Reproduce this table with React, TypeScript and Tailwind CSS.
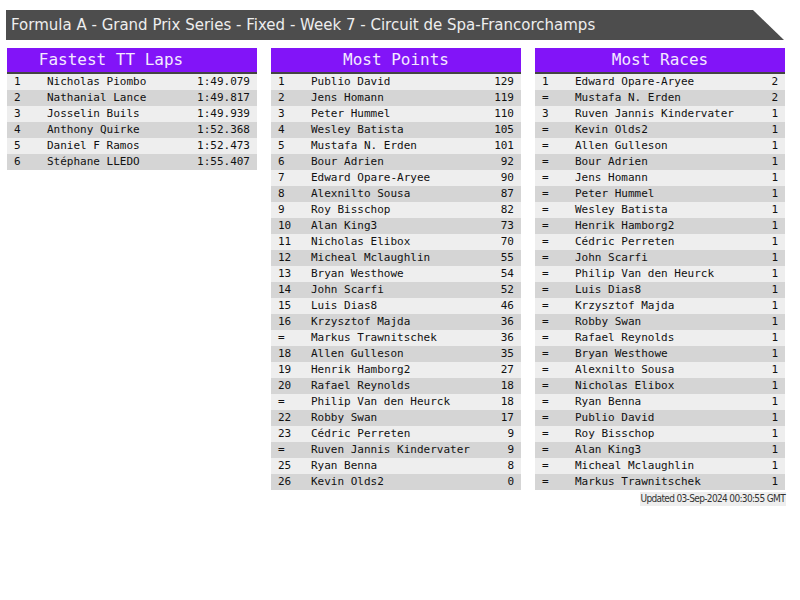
type Row = [string, string, string];

const fastest: Row[] = [
  ["1", "Nicholas Piombo", "1:49.079"],
  ["2", "Nathanial Lance", "1:49.817"],
  ["3", "Josselin Buils", "1:49.939"],
  ["4", "Anthony Quirke", "1:52.368"],
  ["5", "Daniel F Ramos", "1:52.473"],
  ["6", "Stéphane LLEDO", "1:55.407"],
];

const points: Row[] = [
  ["1", "Publio David", "129"],
  ["2", "Jens Homann", "119"],
  ["3", "Peter Hummel", "110"],
  ["4", "Wesley Batista", "105"],
  ["5", "Mustafa N. Erden", "101"],
  ["6", "Bour Adrien", "92"],
  ["7", "Edward Opare-Aryee", "90"],
  ["8", "Alexnilto Sousa", "87"],
  ["9", "Roy Bisschop", "82"],
  ["10", "Alan King3", "73"],
  ["11", "Nicholas Elibox", "70"],
  ["12", "Micheal Mclaughlin", "55"],
  ["13", "Bryan Westhowe", "54"],
  ["14", "John Scarfi", "52"],
  ["15", "Luis Dias8", "46"],
  ["16", "Krzysztof Majda", "36"],
  ["=", "Markus Trawnitschek", "36"],
  ["18", "Allen Gulleson", "35"],
  ["19", "Henrik Hamborg2", "27"],
  ["20", "Rafael Reynolds", "18"],
  ["=", "Philip Van den Heurck", "18"],
  ["22", "Robby Swan", "17"],
  ["23", "Cédric Perreten", "9"],
  ["=", "Ruven Jannis Kindervater", "9"],
  ["25", "Ryan Benna", "8"],
  ["26", "Kevin Olds2", "0"],
];

const races: Row[] = [
  ["1", "Edward Opare-Aryee", "2"],
  ["=", "Mustafa N. Erden", "2"],
  ["3", "Ruven Jannis Kindervater", "1"],
  ["=", "Kevin Olds2", "1"],
  ["=", "Allen Gulleson", "1"],
  ["=", "Bour Adrien", "1"],
  ["=", "Jens Homann", "1"],
  ["=", "Peter Hummel", "1"],
  ["=", "Wesley Batista", "1"],
  ["=", "Henrik Hamborg2", "1"],
  ["=", "Cédric Perreten", "1"],
  ["=", "John Scarfi", "1"],
  ["=", "Philip Van den Heurck", "1"],
  ["=", "Luis Dias8", "1"],
  ["=", "Krzysztof Majda", "1"],
  ["=", "Robby Swan", "1"],
  ["=", "Rafael Reynolds", "1"],
  ["=", "Bryan Westhowe", "1"],
  ["=", "Alexnilto Sousa", "1"],
  ["=", "Nicholas Elibox", "1"],
  ["=", "Ryan Benna", "1"],
  ["=", "Publio David", "1"],
  ["=", "Roy Bisschop", "1"],
  ["=", "Alan King3", "1"],
  ["=", "Micheal Mclaughlin", "1"],
  ["=", "Markus Trawnitschek", "1"],
];

function Board({ title, rows, offset }: { title: string; rows: Row[]; offset?: boolean }) {
  return (
    <div className="w-[250px] font-['DejaVu_Sans_Mono',monospace]">
      <div
        className={`h-[24px] bg-[#8214f8] text-[#f3eaff] text-[16px] leading-[24px] flex justify-center border-b-2 border-[#444444] box-content ${offset ? "pr-[42px]" : ""}`}
      >
        {title}
      </div>
      <div className="flex flex-col">
        {rows.map((r, i) => (
          <div
            key={i}
            className={`h-[16px] flex items-center text-[11px] text-[#111111] pl-[7px] pr-[7px] ${i % 2 === 0 ? "bg-[#eeeeee]" : "bg-[#d5d5d5]"}`}
          >
            <span className="w-[33px] shrink-0">{r[0]}</span>
            <span className="flex-1 whitespace-pre">{r[1]}</span>
            <span className="text-right">{r[2]}</span>
          </div>
        ))}
      </div>
    </div>
  );
}

export default function App() {
  return (
    <div className="w-[800px] h-[600px] bg-white pt-[10px]">
      <div className="ml-[6px] w-[778px] h-[30px] bg-[#4d4d4d] [clip-path:polygon(0_0,747px_0,100%_100%,0_100%)] pl-[5px] flex items-center text-[#eeeeee] text-[15px] font-['DejaVu_Sans',sans-serif]">
        Formula A - Grand Prix Series - Fixed - Week 7 - Circuit de Spa-Francorchamps
      </div>
      <div className="flex gap-[14px] pl-[7px] mt-[8px] items-start">
        <Board title="Fastest TT Laps" rows={fastest} offset />
        <Board title="Most Points" rows={points} />
        <div className="flex flex-col items-end">
          <Board title="Most Races" rows={races} />
          <div className="mt-[2px] mr-[-1px] bg-[#eeeeee] text-[#333333] text-[10px] leading-[14px] px-[1px] font-['DejaVu_Sans_Condensed','DejaVu_Sans',sans-serif] tracking-[-0.65px]">
            Updated 03-Sep-2024 00:30:55 GMT
          </div>
        </div>
      </div>
    </div>
  );
}
